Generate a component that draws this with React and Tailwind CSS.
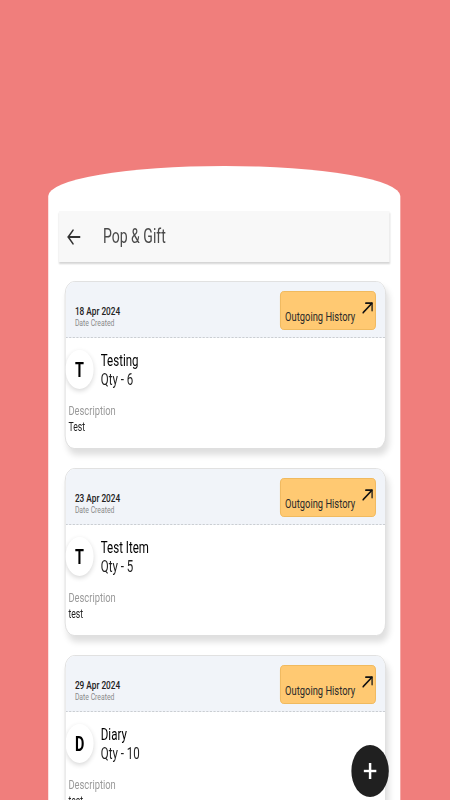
import React from 'react';

const items = [
  { date: '18 Apr 2024', name: 'Testing', qty: 6, desc: 'Test' },
  { date: '23 Apr 2024', name: 'Test Item', qty: 5, desc: 'test' },
  { date: '29 Apr 2024', name: 'Diary', qty: 10, desc: 'test' },
];

function BackArrow() {
  return (
    <svg width="19" height="16" viewBox="0 0 19 16" fill="none" stroke="#333" strokeWidth="1.8" strokeLinecap="round" strokeLinejoin="round">
      <path d="M18 8H1.8" />
      <path d="M8.5 1.2 1.8 8l6.7 6.8" />
    </svg>
  );
}

function OutArrow() {
  return (
    <svg width="15" height="12" viewBox="0 0 15 12" fill="none" stroke="#111" strokeWidth="1.8" strokeLinecap="round" strokeLinejoin="round">
      <path d="M1.2 10.8 13.6 1.3" />
      <path d="M5 1.2h8.8v7.4" />
    </svg>
  );
}

function ItemCard({ item }) {
  return (
    <div className="bg-white border border-[#dcdcdc] rounded-[13px] overflow-hidden shadow-[4px_6px_8px_rgba(0,0,0,0.13)]">
      {/* header */}
      <div className="h-[56px] bg-[#f1f4f9] border-b border-dashed border-[#c4c7cc] flex justify-between items-start pl-[13px] pr-[13px]">
        <div className="mt-[23px]">
          <p className="text-[11.5px] leading-[12px] font-medium text-[#222]">{item.date}</p>
          <p className="text-[9.5px] leading-[11px] text-[#8a8a8a]">Date Created</p>
        </div>
        <button className="mt-[9px] w-[133px] h-[39px] bg-[#ffc972] border border-[#efb350] rounded-[5px] flex justify-between items-start pl-[6px] pr-[3px]">
          <span className="mt-[17px] text-[13px] leading-[15px] text-[#2a2a2a]">Outgoing History</span>
          <span className="mt-[10px]"><OutArrow /></span>
        </button>
      </div>
      {/* body */}
      <div className="pt-[12px] pb-[13px] pl-[4px]">
        <div className="flex items-center -ml-[4px]">
          <div className="w-[39px] h-[39px] rounded-full bg-white shadow-[0_2px_6px_rgba(0,0,0,0.16)] flex items-center justify-center">
            <span className="text-[20px] font-bold text-black leading-none">{item.name[0]}</span>
          </div>
          <div className="ml-[10px]">
            <p className="text-[16px] leading-[19px] text-black">{item.name}</p>
            <p className="text-[16px] leading-[19px] text-[#222]">Qty - {item.qty}</p>
          </div>
        </div>
        <p className="mt-[14px] text-[13px] leading-[16px] text-[#9a9a9a]">Description</p>
        <p className="text-[12px] leading-[16px] text-[#222]">{item.desc}</p>
      </div>
    </div>
  );
}

export default function App() {
  return (
    <div className="w-[450px] h-[800px] overflow-hidden bg-[#f07e7c] font-['Roboto',sans-serif]">
      <div className="relative w-[625px] h-[800px] origin-top-left scale-x-[0.72] pt-[166px] pl-[67px]">
        <div className="w-[489px] h-[634px] bg-white rounded-t-[244px_30px] pt-[45px] px-[15px]">
          <div className="h-[51px] bg-[#f8f8f8] flex items-center pl-[11px] shadow-[0_2px_2px_rgba(0,0,0,0.17)]">
            <BackArrow />
            <h1 className="ml-[31px] text-[19.5px] text-[#4a4a4a]">Pop &amp; Gift</h1>
          </div>
          <div className="mt-[19px] ml-[8px] mr-[5px] flex flex-col gap-[19px]">
            {items.map((item) => (
              <ItemCard key={item.date} item={item} />
            ))}
          </div>
        </div>

        <button className="absolute right-[85px] top-[745px] w-[52px] h-[52px] rounded-full bg-[#202020] flex items-center justify-center">
          <svg width="18" height="16" viewBox="0 0 18 16" fill="#fff">
            <rect x="7.3" y="0" width="3.4" height="16" />
            <rect x="0" y="6.8" width="18" height="2.4" />
          </svg>
        </button>
      </div>
    </div>
  );
}
